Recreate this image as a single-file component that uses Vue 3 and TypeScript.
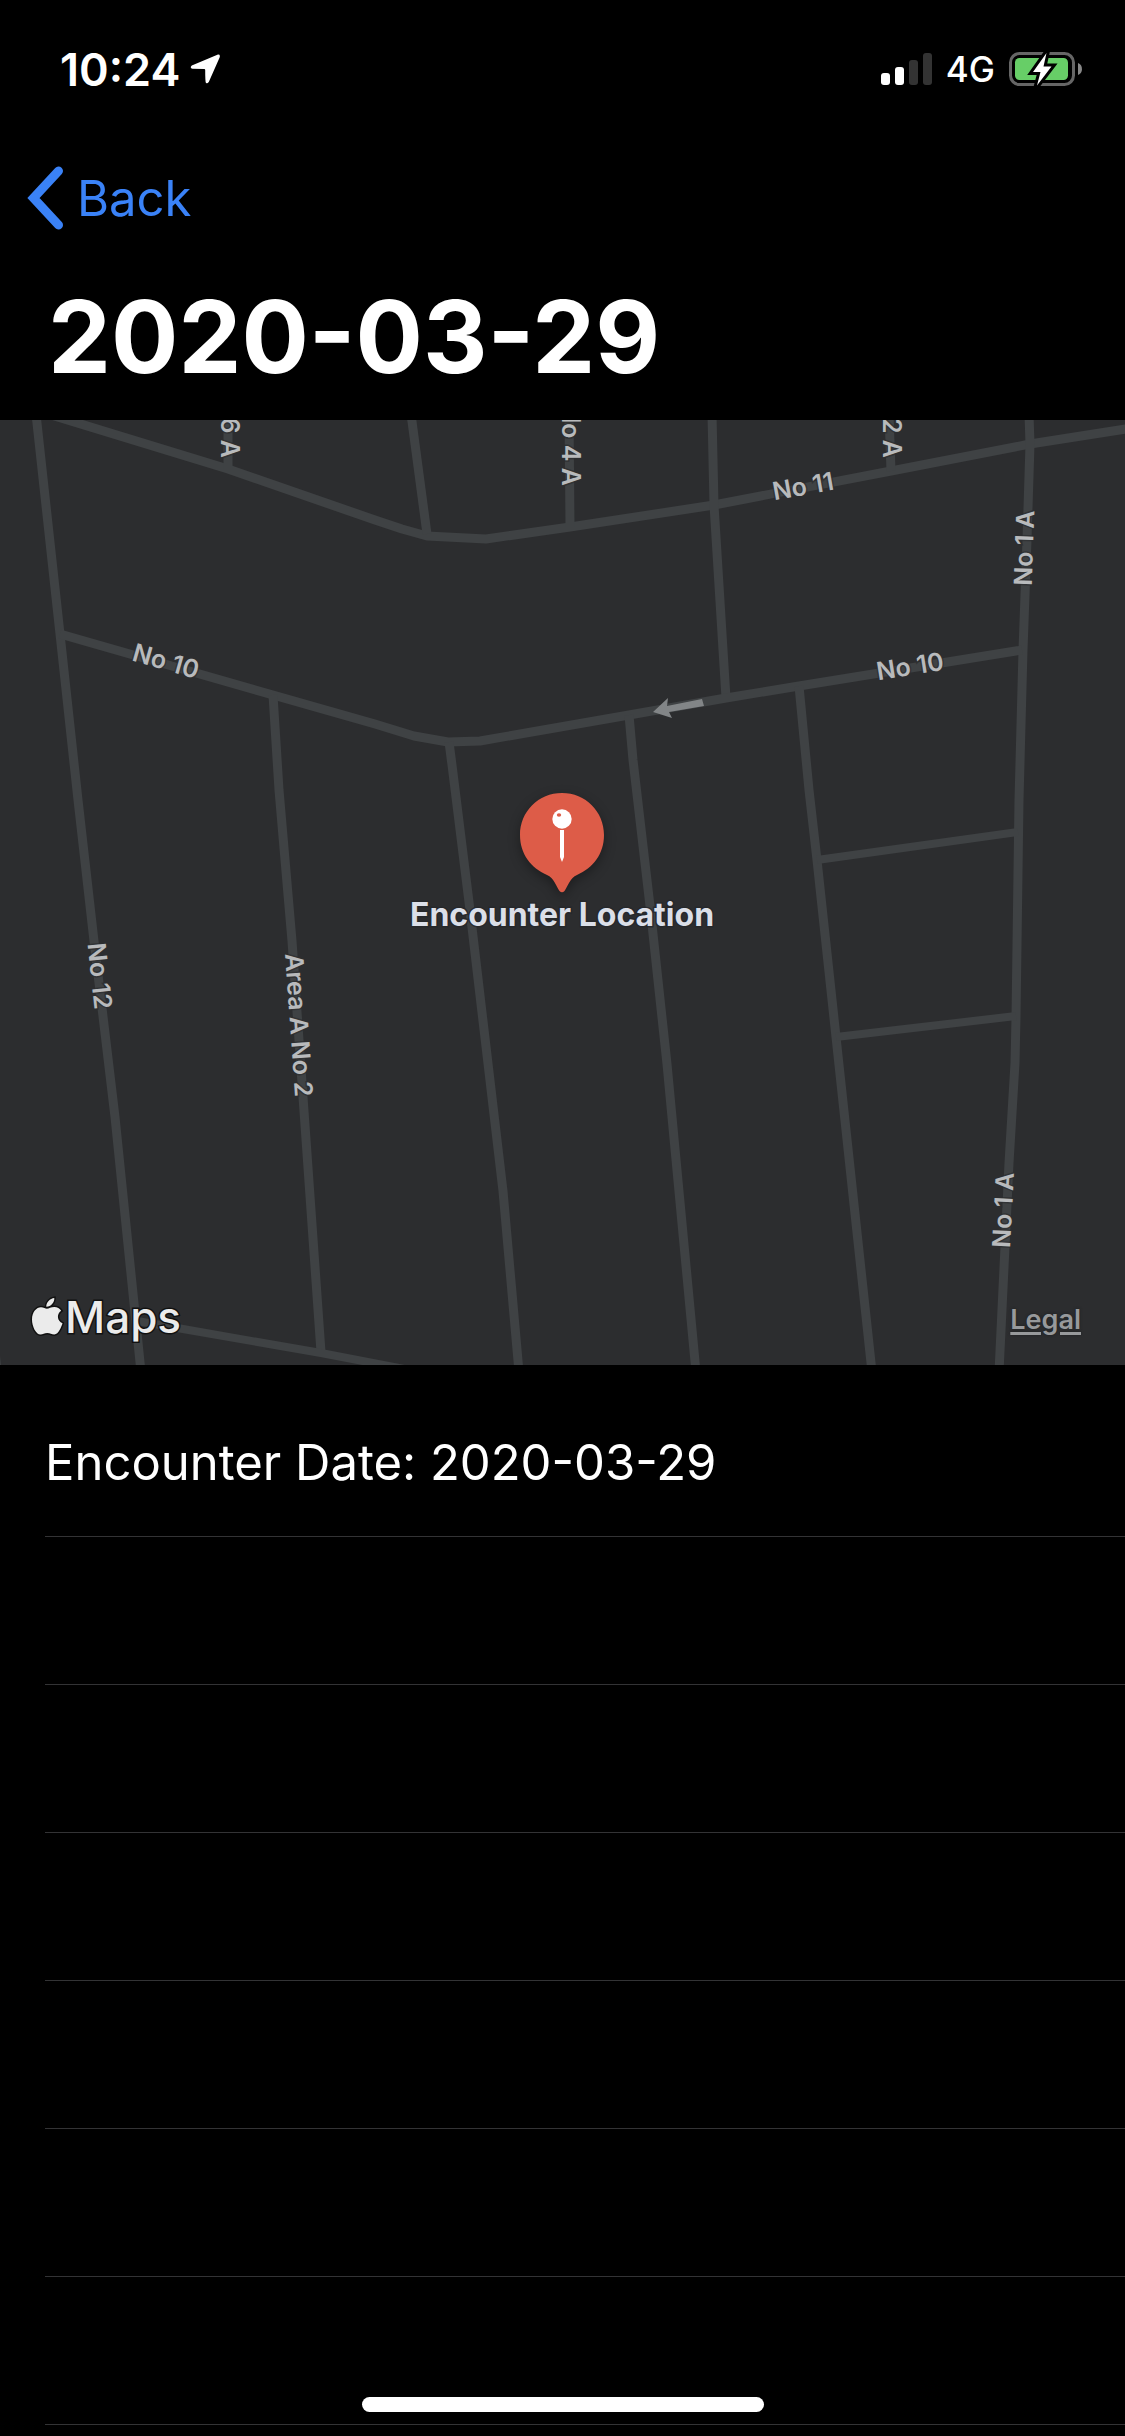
<script setup lang="ts">
interface Road {
  d: string
  width: number
}

interface StreetLabel {
  text: string
  x: number
  y: number
  angle: number
  anchor: 'middle' | 'end'
}

const encounterDate = '2020-03-29'
const emptyRows = 6

const roads: Road[] = [
  { d: 'M36 414 L60 634 L78 800 L94 941 L115 1117 L141 1372', width: 9 },
  { d: 'M48 414 L228 469 L375 520 L402 529 L427 536 L486 539 L570 527 L714 505 L891 471 L1030 444 L1132 428', width: 9 },
  { d: 'M228 414 V469', width: 9 },
  { d: 'M411 414 L427 534', width: 9 },
  { d: 'M569 414 L570 527', width: 9 },
  { d: 'M712 414 L714 505 L726 698', width: 9 },
  { d: 'M889 414 L891 471', width: 9 },
  { d: 'M1029 414 L1030 444 L1027 540 L1023 650 L1019 800 L1016 1017 L1015 1063 L1009 1163 L999 1372', width: 9 },
  { d: 'M60 634 L273 695 L375 724 L414 736 L448 742 L480 741 L629 715 L726 698 L799 686 L1022 650', width: 9 },
  { d: 'M273 695 L279 790 L292 941 L321 1352', width: 9 },
  { d: 'M137 1321 L183 1329 L321 1353 L420 1372', width: 8 },
  { d: 'M449 742 L452 765 L469 902 L503 1191 L519 1372', width: 9 },
  { d: 'M629 715 L633 760 L650 906 L667 1064 L696 1372', width: 9 },
  { d: 'M799 686 L809 790 L817 860 L836 1037 L872 1372', width: 9 },
  { d: 'M817 860 L1018 832', width: 8 },
  { d: 'M836 1037 L1016 1016', width: 8 },
  { d: 'M-6 1340 L-3 1372', width: 9 },
]

const streetLabels: StreetLabel[] = [
  { text: '6 A', x: 230, y: 458, angle: 90, anchor: 'end' },
  { text: 'No 4 A', x: 571, y: 486, angle: 90, anchor: 'end' },
  { text: '2 A', x: 892, y: 458, angle: 90, anchor: 'end' },
  { text: 'No 11', x: 803, y: 486, angle: -10, anchor: 'middle' },
  { text: 'No 1 A', x: 1024, y: 548, angle: -88, anchor: 'middle' },
  { text: 'No 10', x: 166, y: 661, angle: 16, anchor: 'middle' },
  { text: 'No 10', x: 910, y: 666, angle: -9, anchor: 'middle' },
  { text: 'No 12', x: 100, y: 976, angle: 84, anchor: 'middle' },
  { text: 'Area A No 2', x: 299, y: 1025, angle: 86, anchor: 'middle' },
  { text: 'No 1 A', x: 1003, y: 1210, angle: -87, anchor: 'middle' },
]
</script>

<template>
  <div class="screen">
    <header class="status-bar">
      <div class="clock">
        <span>10:24</span>
        <svg class="location" width="30" height="30" viewBox="0 0 30 30" aria-hidden="true">
          <path d="M28 0.500 Q30.600 0.300 29.600 3.400 L18.900 27.800 Q17.600 30.200 15.900 28.700 Q15.200 28 15.200 16 Q15.200 15 14.200 15 L2.400 14.800 Q-0.600 13.600 1.800 11.400 Z" />
        </svg>
      </div>
      <div class="indicators">
        <svg width="51" height="32" viewBox="0 0 51 32" role="img" aria-label="Signal strength">
          <rect x="0" y="20" width="9" height="12" rx="3" fill="#fff" />
          <rect x="14" y="14" width="9" height="18" rx="3" fill="#fff" />
          <rect x="28" y="7" width="9" height="25" rx="3" fill="#333" />
          <rect x="42" y="0" width="9" height="32" rx="3" fill="#333" />
        </svg>
        <span class="network">4G</span>
        <svg width="74" height="36" viewBox="0 0 74 36" role="img" aria-label="Battery charging">
          <rect x="1.500" y="2.500" width="63" height="31" rx="9" fill="none" stroke="#666" stroke-width="3" />
          <rect x="6" y="7" width="53" height="22" rx="4.500" fill="#67ce67" />
          <path d="M69 12 C74.300 13.500 74.300 22.500 69 24 Z" fill="#888" />
          <path d="M37.500 2 L24 21 H31.500 L28 34.500 L42.500 15.500 H34.500 Z" fill="#fff" stroke="#000" stroke-width="6" stroke-miterlimit="8" paint-order="stroke" />
        </svg>
      </div>
    </header>

    <nav class="nav-bar">
      <button class="back" type="button">
        <svg width="36" height="64" viewBox="0 0 36 64" aria-hidden="true">
          <path d="M31.500 5 L6.500 32 L31.500 59" fill="none" stroke="currentColor" stroke-width="9" stroke-linecap="round" />
        </svg>
        <span>Back</span>
      </button>
    </nav>

    <h1 class="title">{{ encounterDate }}</h1>

    <section class="map" aria-label="Encounter map">
      <svg class="map-canvas" viewBox="0 420 1125 945" preserveAspectRatio="xMidYMid slice">
        <g class="roads">
          <path v-for="road in roads" :key="road.d" :d="road.d" :stroke-width="road.width" />
        </g>
        <path class="direction" d="M653 712 L668 698 L667 706 L702 699 L704 706 L669 712 L672 718 Z" />
        <g class="street-labels">
          <text
            v-for="(label, index) in streetLabels"
            :key="index"
            :transform="`translate(${label.x} ${label.y}) rotate(${label.angle})`"
            :text-anchor="label.anchor"
            y="9"
          >{{ label.text }}</text>
        </g>
        <g class="pin">
          <path class="balloon" d="M562 793 C585.500 793 604 811.500 604 835 C604 854 593 868 577 875 C570 878 568 886 564.500 891 Q562 893.500 559.500 891 C556 886 554 878 547 875 C531 868 520 854 520 835 C520 811.500 538.500 793 562 793 Z" />
          <circle cx="562" cy="819" r="9.700" fill="#fff" />
          <ellipse cx="559" cy="815" rx="2.200" ry="1.800" fill="#dd5c48" />
          <path d="M560 830 H564 V857 L562 862 L560 857 Z" fill="#fff" />
        </g>
        <text class="pin-label" x="562" y="926" text-anchor="middle">Encounter Location</text>
      </svg>
      <div class="attribution">
        <div class="brand">
          <svg width="34" height="42" viewBox="0 0 34 42" aria-hidden="true">
            <path d="M24.300 2 C24.700 6.500 20.500 11 16.300 10.800 C16 6.600 20 2.400 24.300 2 Z M16.800 12.700 C18.900 12.700 21 11 24.300 11 C27.300 11 29.800 12.600 31.200 14.700 C26.300 17.700 27 25 32.500 27.300 C31.500 30.500 28.600 38.500 24.300 38.500 C21.500 38.500 20.300 37 17.300 37 C14.300 37 12.900 38.500 10.500 38.500 C6 38.500 2 30.500 2 23.500 C2 16 6.500 11.300 11 11.300 C13.500 11.300 15.500 12.700 16.800 12.700 Z" />
          </svg>
          <span>Maps</span>
        </div>
        <a class="legal" href="#legal">Legal</a>
      </div>
    </section>

    <ul class="details">
      <li class="row">Encounter Date: {{ encounterDate }}</li>
      <li v-for="n in emptyRows" :key="n" class="row"></li>
    </ul>

    <div class="home-indicator"></div>
  </div>
</template>

<style>
body {
  background: #000;
}
</style>

<style scoped>
.screen {
  position: relative;
  min-height: 100vh;
  box-sizing: border-box;
  overflow: hidden;
  background: #000;
  color: #fff;
  font-family: Inter, "Liberation Sans", sans-serif;
}

.status-bar {
  display: flex;
  justify-content: space-between;
  align-items: center;
  height: 132px;
  padding: 6px 42px 0 60px;
  box-sizing: border-box;
}

.clock {
  display: flex;
  align-items: center;
  gap: 10px;
  font-size: 45px;
  font-weight: 600;
}

.location {
  fill: #fff;
}

.indicators {
  display: flex;
  align-items: center;
  gap: 14px;
}

.network {
  font-size: 35px;
  font-weight: 500;
}

.nav-bar {
  display: flex;
  align-items: center;
  height: 132px;
  padding: 0 27px;
}

.back {
  display: flex;
  align-items: center;
  gap: 14px;
  padding: 0;
  border: 0;
  background: none;
  color: #3a82f7;
  font: inherit;
  font-size: 49px;
}

.title {
  height: 156px;
  margin: 0;
  padding: 0 48px;
  font-size: 100px;
  font-weight: 700;
  line-height: 146px;
}

.map {
  position: relative;
  height: 945px;
  background: #2c2d2f;
}

.map-canvas {
  display: block;
  width: 100%;
  height: 100%;
}

.roads {
  fill: none;
  stroke: #3f4244;
  stroke-linejoin: round;
}

.direction {
  fill: #828587;
}

.street-labels {
  fill: #b8babc;
  stroke: #2c2d2f;
  stroke-width: 3px;
  stroke-opacity: 0.7;
  paint-order: stroke;
  font-size: 25px;
  font-weight: 600;
}

.balloon {
  fill: #dd5c48;
  filter: drop-shadow(0 4px 6px rgba(0, 0, 0, 0.35));
}

.pin-label {
  fill: #dbdfe8;
  stroke: #25272b;
  stroke-width: 3px;
  stroke-opacity: 0.8;
  paint-order: stroke;
  font-size: 32px;
  font-weight: 700;
}

.attribution {
  position: absolute;
  right: 44px;
  bottom: 18px;
  left: 30px;
  display: flex;
  justify-content: space-between;
  align-items: center;
}

.brand {
  display: flex;
  align-items: center;
  gap: 1px;
  color: #ebebeb;
  font-size: 44px;
  font-weight: 500;
  line-height: 60px;
  -webkit-text-stroke: 3px #111;
  paint-order: stroke;
}

.brand svg {
  fill: #ebebeb;
  stroke: #111;
  stroke-width: 3px;
  paint-order: stroke;
}

.legal {
  padding-top: 4px;
  color: #97999b;
  font-size: 27px;
  font-weight: 600;
  text-decoration-thickness: 3px;
  text-underline-offset: 3px;
  text-shadow: 0 0 3px #1c1d1f;
}

.details {
  margin: 0;
  padding: 24px 0 0 45px;
  list-style: none;
  font-size: 49px;
}

.row {
  display: flex;
  align-items: center;
  height: 148px;
  box-sizing: border-box;
  border-bottom: 1px solid #333335;
}

.home-indicator {
  position: absolute;
  right: 0;
  bottom: 24px;
  left: 0;
  width: 402px;
  height: 15px;
  margin: 0 auto;
  border-radius: 8px;
  background: #fff;
}
</style>
